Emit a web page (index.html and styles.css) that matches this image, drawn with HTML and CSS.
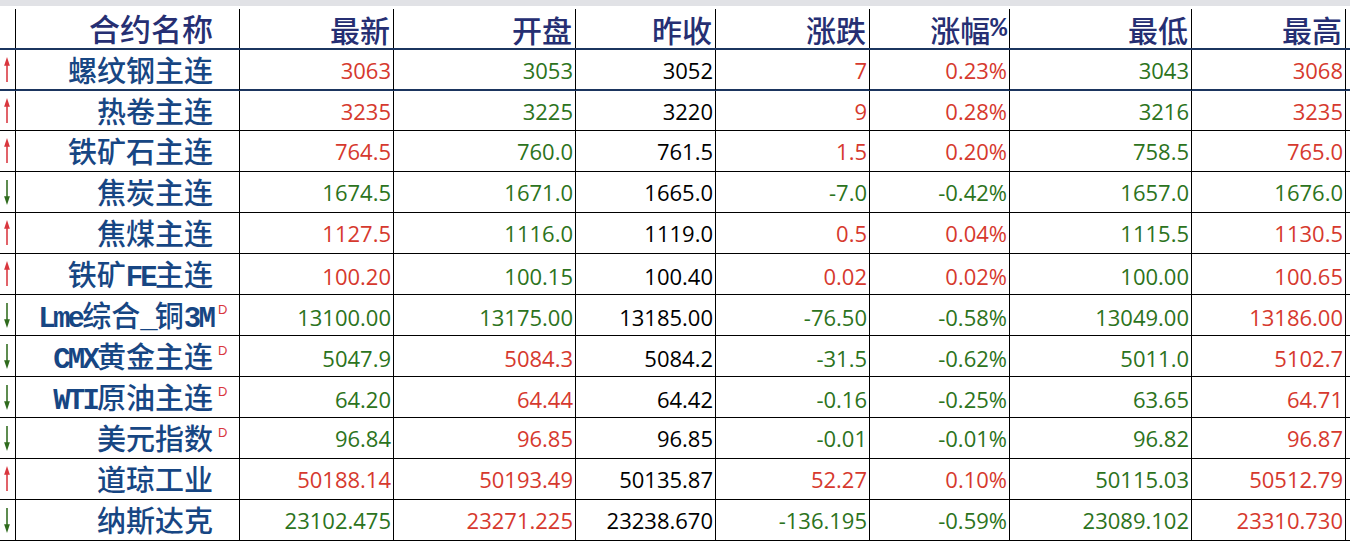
FILE: index.html
```html
<!DOCTYPE html>
<html lang="zh-CN">
<head>
<meta charset="utf-8">
<title>行情</title>
<link rel="stylesheet" href="styles.css">
</head>
<body>
<div class="topbar"></div>
<div class="sheet">
  <div class="row head navy">
    <div class="c arrow"></div>
    <div class="c name"><span class="nm">合约名称</span><span class="sup"></span></div>
    <div class="c hd">最新</div>
    <div class="c hd">开盘</div>
    <div class="c hd">昨收</div>
    <div class="c hd">涨跌</div>
    <div class="c hd">涨幅<span class="lat">%</span></div>
    <div class="c hd">最低</div>
    <div class="c hd">最高</div>
    <div class="c end"></div>
  </div>

  <div class="row navy r1">
    <div class="c arrow"><svg class="up" viewBox="0 0 8 27"><path d="M4 0 L7 9 L4.8 9 L4.8 26 L3.2 26 L3.2 9 L1 9 Z"/></svg></div>
    <div class="c name"><span class="nm">螺纹钢主连</span><span class="sup"></span></div>
    <div class="c num red">3063</div>
    <div class="c num grn">3053</div>
    <div class="c num">3052</div>
    <div class="c num red">7</div>
    <div class="c num red">0.23%</div>
    <div class="c num grn">3043</div>
    <div class="c num red">3068</div>
    <div class="c end"></div>
  </div>

  <div class="row r2">
    <div class="c arrow"><svg class="up" viewBox="0 0 8 27"><path d="M4 0 L7 9 L4.8 9 L4.8 26 L3.2 26 L3.2 9 L1 9 Z"/></svg></div>
    <div class="c name"><span class="nm">热卷主连</span><span class="sup"></span></div>
    <div class="c num red">3235</div>
    <div class="c num grn">3225</div>
    <div class="c num">3220</div>
    <div class="c num red">9</div>
    <div class="c num red">0.28%</div>
    <div class="c num grn">3216</div>
    <div class="c num red">3235</div>
    <div class="c end"></div>
  </div>

  <div class="row">
    <div class="c arrow"><svg class="up" viewBox="0 0 8 27"><path d="M4 0 L7 9 L4.8 9 L4.8 26 L3.2 26 L3.2 9 L1 9 Z"/></svg></div>
    <div class="c name"><span class="nm">铁矿石主连</span><span class="sup"></span></div>
    <div class="c num red">764.5</div>
    <div class="c num grn">760.0</div>
    <div class="c num">761.5</div>
    <div class="c num red">1.5</div>
    <div class="c num red">0.20%</div>
    <div class="c num grn">758.5</div>
    <div class="c num red">765.0</div>
    <div class="c end"></div>
  </div>

  <div class="row">
    <div class="c arrow"><svg class="down" viewBox="0 0 8 27"><path d="M4 27 L7 18 L4.8 18 L4.8 1 L3.2 1 L3.2 18 L1 18 Z"/></svg></div>
    <div class="c name"><span class="nm">焦炭主连</span><span class="sup"></span></div>
    <div class="c num grn">1674.5</div>
    <div class="c num grn">1671.0</div>
    <div class="c num">1665.0</div>
    <div class="c num grn">-7.0</div>
    <div class="c num grn">-0.42%</div>
    <div class="c num grn">1657.0</div>
    <div class="c num grn">1676.0</div>
    <div class="c end"></div>
  </div>

  <div class="row">
    <div class="c arrow"><svg class="up" viewBox="0 0 8 27"><path d="M4 0 L7 9 L4.8 9 L4.8 26 L3.2 26 L3.2 9 L1 9 Z"/></svg></div>
    <div class="c name"><span class="nm">焦煤主连</span><span class="sup"></span></div>
    <div class="c num red">1127.5</div>
    <div class="c num grn">1116.0</div>
    <div class="c num">1119.0</div>
    <div class="c num red">0.5</div>
    <div class="c num red">0.04%</div>
    <div class="c num grn">1115.5</div>
    <div class="c num red">1130.5</div>
    <div class="c end"></div>
  </div>

  <div class="row">
    <div class="c arrow"><svg class="up" viewBox="0 0 8 27"><path d="M4 0 L7 9 L4.8 9 L4.8 26 L3.2 26 L3.2 9 L1 9 Z"/></svg></div>
    <div class="c name"><span class="nm">铁矿<span class="lat">FE</span>主连</span><span class="sup"></span></div>
    <div class="c num red">100.20</div>
    <div class="c num grn">100.15</div>
    <div class="c num">100.40</div>
    <div class="c num red">0.02</div>
    <div class="c num red">0.02%</div>
    <div class="c num grn">100.00</div>
    <div class="c num red">100.65</div>
    <div class="c end"></div>
  </div>

  <div class="row">
    <div class="c arrow"><svg class="down" viewBox="0 0 8 27"><path d="M4 27 L7 18 L4.8 18 L4.8 1 L3.2 1 L3.2 18 L1 18 Z"/></svg></div>
    <div class="c name"><span class="nm"><span class="lat">Lme</span>综合<span class="lat">_</span>铜<span class="lat">3M</span></span><span class="sup">D</span></div>
    <div class="c num grn">13100.00</div>
    <div class="c num grn">13175.00</div>
    <div class="c num">13185.00</div>
    <div class="c num grn">-76.50</div>
    <div class="c num grn">-0.58%</div>
    <div class="c num grn">13049.00</div>
    <div class="c num red">13186.00</div>
    <div class="c end"></div>
  </div>

  <div class="row">
    <div class="c arrow"><svg class="down" viewBox="0 0 8 27"><path d="M4 27 L7 18 L4.8 18 L4.8 1 L3.2 1 L3.2 18 L1 18 Z"/></svg></div>
    <div class="c name"><span class="nm"><span class="lat">CMX</span>黄金主连</span><span class="sup">D</span></div>
    <div class="c num grn">5047.9</div>
    <div class="c num red">5084.3</div>
    <div class="c num">5084.2</div>
    <div class="c num grn">-31.5</div>
    <div class="c num grn">-0.62%</div>
    <div class="c num grn">5011.0</div>
    <div class="c num red">5102.7</div>
    <div class="c end"></div>
  </div>

  <div class="row">
    <div class="c arrow"><svg class="down" viewBox="0 0 8 27"><path d="M4 27 L7 18 L4.8 18 L4.8 1 L3.2 1 L3.2 18 L1 18 Z"/></svg></div>
    <div class="c name"><span class="nm"><span class="lat">WTI</span>原油主连</span><span class="sup">D</span></div>
    <div class="c num grn">64.20</div>
    <div class="c num red">64.44</div>
    <div class="c num">64.42</div>
    <div class="c num grn">-0.16</div>
    <div class="c num grn">-0.25%</div>
    <div class="c num grn">63.65</div>
    <div class="c num red">64.71</div>
    <div class="c end"></div>
  </div>

  <div class="row">
    <div class="c arrow"><svg class="down" viewBox="0 0 8 27"><path d="M4 27 L7 18 L4.8 18 L4.8 1 L3.2 1 L3.2 18 L1 18 Z"/></svg></div>
    <div class="c name"><span class="nm">美元指数</span><span class="sup">D</span></div>
    <div class="c num grn">96.84</div>
    <div class="c num red">96.85</div>
    <div class="c num">96.85</div>
    <div class="c num grn">-0.01</div>
    <div class="c num grn">-0.01%</div>
    <div class="c num grn">96.82</div>
    <div class="c num red">96.87</div>
    <div class="c end"></div>
  </div>

  <div class="row">
    <div class="c arrow"><svg class="up" viewBox="0 0 8 27"><path d="M4 0 L7 9 L4.8 9 L4.8 26 L3.2 26 L3.2 9 L1 9 Z"/></svg></div>
    <div class="c name"><span class="nm">道琼工业</span><span class="sup"></span></div>
    <div class="c num red">50188.14</div>
    <div class="c num red">50193.49</div>
    <div class="c num">50135.87</div>
    <div class="c num red">52.27</div>
    <div class="c num red">0.10%</div>
    <div class="c num grn">50115.03</div>
    <div class="c num red">50512.79</div>
    <div class="c end"></div>
  </div>

  <div class="row">
    <div class="c arrow"><svg class="down" viewBox="0 0 8 27"><path d="M4 27 L7 18 L4.8 18 L4.8 1 L3.2 1 L3.2 18 L1 18 Z"/></svg></div>
    <div class="c name"><span class="nm">纳斯达克</span><span class="sup"></span></div>
    <div class="c num grn">23102.475</div>
    <div class="c num red">23271.225</div>
    <div class="c num">23238.670</div>
    <div class="c num grn">-136.195</div>
    <div class="c num grn">-0.59%</div>
    <div class="c num grn">23089.102</div>
    <div class="c num red">23310.730</div>
    <div class="c end"></div>
  </div>
</div>
</body>
</html>
```

FILE: styles.css
```css
html, body {
  margin: 0;
  padding: 0;
  background: #ffffff;
}

.topbar {
  height: 6px;
  background: #e1e2e6;
}

.sheet {
  margin-top: 3px;
  width: 1350px;
}

.row {
  display: grid;
  grid-template-columns: 15px 224px 154px 182px 140px 154px 140px 182px 154px 5px;
  height: 41px;
  box-sizing: border-box;
  border-bottom: 1px solid #000;
}

.row.navy {
  border-bottom: 2px solid #1b355f;
}

.row.r2 {
  height: 40px;
}

.c {
  box-sizing: border-box;
  border-left: 1px solid #000;
  display: flex;
  align-items: center;
  justify-content: flex-end;
  white-space: nowrap;
}

.c.arrow {
  border-left: none;
  justify-content: center;
  align-items: flex-start;
}

.arrow svg {
  width: 8px;
  height: 26px;
  margin-top: 7px;
  margin-left: -2px;
}

.up path { fill: #d9363e; }
.down path { fill: #2f6b1d; }

.c.name {
  font-family: "Noto Sans CJK SC", "Noto Sans", sans-serif;
  font-size: 29px;
  line-height: 36px;
  color: #174683;
  font-weight: 500;
  align-items: flex-start;
}

.name .nm {
  display: block;
  padding-top: 1px;
}

.head .c.name {
  font-size: 31px;
  color: #262f73;
}

.head .name .nm {
  padding-top: 1px;
}

.name .sup {
  width: 26px;
  box-sizing: border-box;
  padding-left: 5px;
  font-family: "Liberation Sans", sans-serif;
  font-size: 13px;
  line-height: 13px;
  color: #d9363e;
  padding-top: 8px;
}

.lat {
  font-family: "Liberation Mono", monospace;
  font-weight: bold;
  letter-spacing: -2.8px;
  font-size: 29px;
}

.c.hd {
  font-family: "Noto Sans CJK SC", "Noto Sans", sans-serif;
  font-size: 30px;
  line-height: 36px;
  color: #262f73;
  font-weight: 500;
  padding-right: 3px;
  align-items: flex-start;
  padding-top: 2px;
}

.c.hd .lat {
  font-size: 28px;
  letter-spacing: -1px;
}

.c.num {
  font-family: "Open Sans", "Liberation Sans", sans-serif;
  font-size: 22px;
  line-height: 39px;
  color: #000;
  padding-right: 2px;
  padding-top: 1px;
}

.c.num.red { color: #d6392e; }
.c.num.grn { color: #2c7320; }

.c.end {
  border-left: 1px solid #000;
}
```
